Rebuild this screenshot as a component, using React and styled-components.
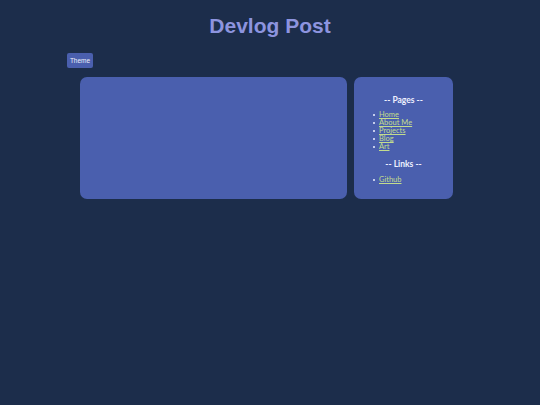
import React from "react";
import styled, { createGlobalStyle } from "styled-components";

const Global = createGlobalStyle`
  html, body { margin: 0; padding: 0; background: #1c2d4b; }
  body { font-family: Lato, "Open Sans", sans-serif; }
`;

const Page = styled.div`
  width: 540px;
  min-height: 405px;
  background: #1c2d4b;
  padding-top: 14px;
  box-sizing: border-box;
`;

const Title = styled.h1`
  margin: 0;
  text-align: center;
  font-family: "Liberation Sans", Arial, sans-serif;
  font-weight: bold;
  font-size: 21px;
  line-height: 24px;
  color: #8d94df;
`;

const Toolbar = styled.div`
  display: flex;
  padding-left: 67px;
  margin-top: 15px;
`;

const ThemeButton = styled.button`
  width: 26px;
  height: 15px;
  padding: 0;
  border: none;
  border-radius: 2px;
  background: #4a5fae;
  color: #eef0fa;
  font-family: "Liberation Sans", Arial, sans-serif;
  font-size: 6.5px;
  cursor: pointer;
`;

const Layout = styled.div`
  display: flex;
  gap: 7px;
  padding-left: 80px;
  margin-top: 9px;
`;

const Card = styled.div`
  background: #4a5fae;
  border-radius: 7px;
  height: 122px;
  box-sizing: border-box;
`;

const Main = styled(Card)`
  width: 267px;
`;

const Sidebar = styled(Card)`
  width: 99px;
  padding: 18px 0 0 0;
  color: #eef0ff;
`;

const Heading = styled.div`
  text-align: center;
  font-weight: bold;
  font-size: 8.5px;
  line-height: 10px;
  margin-top: ${(p) => p.$mt || 0}px;
`;

const List = styled.ul`
  margin: ${(p) => p.$mt}px 0 0 0;
  padding: 0 0 0 25px;
  font-size: 7.5px;
  line-height: 8px;
  list-style: none;
`;

const Item = styled.li`
  position: relative;
  &::before {
    content: "";
    position: absolute;
    left: -6px;
    top: 3px;
    width: 2px;
    height: 2px;
    border-radius: 50%;
    background: #eef0ff;
  }
`;

const Link = styled.a`
  color: #c3dc8d;
  text-decoration: underline;
  &:visited { color: #c3dc8d; }
`;

const pages = ["Home", "About Me", "Projects", "Blog", "Art"];

export default function App() {
  return (
    <>
      <Global />
      <Page>
        <Title>Devlog Post</Title>
        <Toolbar>
          <ThemeButton>Theme</ThemeButton>
        </Toolbar>
        <Layout>
          <Main />
          <Sidebar>
            <Heading>-- Pages --</Heading>
            <List $mt={6}>
              {pages.map((p) => (
                <Item key={p}>
                  <Link href="#">{p}</Link>
                </Item>
              ))}
            </List>
            <Heading $mt={8}>-- Links --</Heading>
            <List $mt={7}>
              <Item>
                <Link href="#">Github</Link>
              </Item>
            </List>
          </Sidebar>
        </Layout>
      </Page>
    </>
  );
}
